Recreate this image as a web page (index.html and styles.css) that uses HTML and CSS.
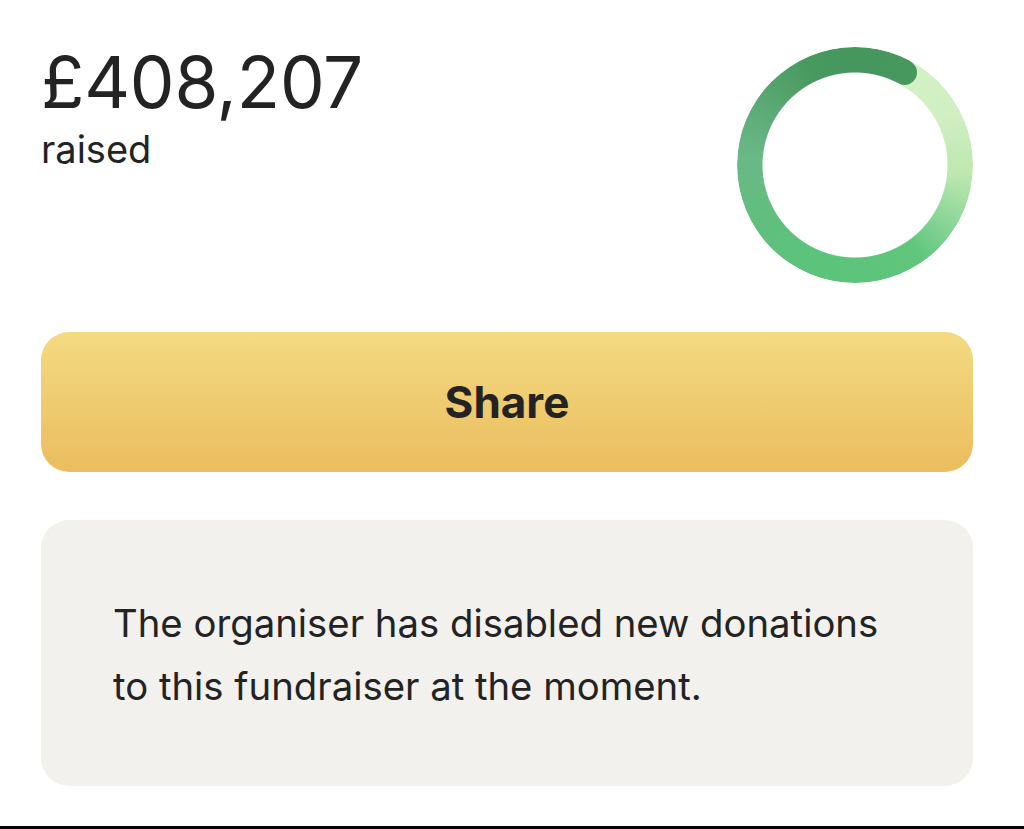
FILE: index.html
```html
<!DOCTYPE html>
<html lang="en">
<head>
<meta charset="utf-8">
<title>Fundraiser</title>
<link rel="stylesheet" href="styles.css">
</head>
<body>
<main class="panel">
  <section class="summary">
    <div class="totals">
      <div class="amount">£408,207</div>
      <div class="label">raised</div>
    </div>
    <div class="ring" aria-hidden="true">
      <span class="ring-cap"></span>
    </div>
  </section>
  <button class="share" type="button">Share</button>
  <div class="notice">
    <p>The organiser has disabled new donations to this fundraiser at the moment.</p>
  </div>
</main>
<div class="bottom-bar"></div>
</body>
</html>
```

FILE: styles.css
```css
* { box-sizing: border-box; }
html, body { margin: 0; padding: 0; background: #fff; }
body {
  font-family: Inter, "Noto Sans", "Liberation Sans", sans-serif;
  color: #232323;
}
.panel {
  width: 932px;
  margin-left: 41px;
  padding-top: 47px;
}
.summary {
  display: flex;
  justify-content: space-between;
  align-items: flex-start;
}
.amount {
  font-size: 71px;
  line-height: 70px;
  letter-spacing: -0.2px;
  font-weight: 400;
}
.label {
  font-size: 38px;
  line-height: 46px;
  margin-top: 9px;
}
.ring {
  position: relative;
  width: 236px;
  height: 236px;
  border-radius: 50%;
  background: conic-gradient(
    #45975e 0deg,
    #46985f 28deg,
    #d3f1c5 28deg,
    #d0efc2 62deg,
    #bde8ae 95deg,
    #8ad598 122deg,
    #5fc67c 145deg,
    #5bc47a 200deg,
    #60bf7e 240deg,
    #6ab886 275deg,
    #5aa873 305deg,
    #48995f 335deg,
    #45975e 360deg
  );
  -webkit-mask: radial-gradient(circle, transparent 92px, #000 93px);
  mask: radial-gradient(circle, transparent 92px, #000 93px);
}
.ring-cap {
  position: absolute;
  width: 25px;
  height: 25px;
  border-radius: 50%;
  background: #46985f;
  left: 154.8px;
  top: 12.8px;
}
.share {
  display: block;
  width: 100%;
  height: 140px;
  margin-top: 49px;
  border: 0;
  border-radius: 28px;
  background: linear-gradient(#f3da82, #ebbd5e);
  font-family: inherit;
  font-size: 44px;
  font-weight: 700;
  color: #232323;
  cursor: pointer;
}
.notice {
  margin-top: 48px;
  height: 266px;
  border-radius: 28px;
  background: #f2f1ed;
  padding: 72px 72px 0;
}
.notice p {
  margin: 0;
  font-size: 38.3px;
  line-height: 63px;
}
.bottom-bar {
  margin-top: 40px;
  height: 4px;
  background: #000;
}
```
